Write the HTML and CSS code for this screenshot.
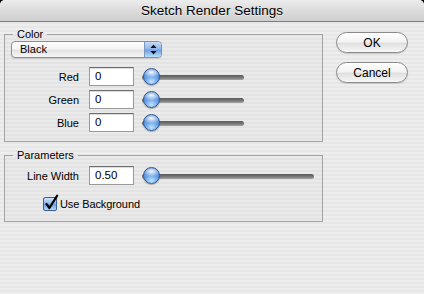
FILE: index.html
```html
<!DOCTYPE html>
<html>
<head>
<meta charset="utf-8">
<link rel="stylesheet" href="styles.css">
</head>
<body>
<div class="window">
  <div class="titlebar">Sketch Render Settings</div>
  <div class="content">
    <div class="groups">
      <fieldset class="group group-color">
        <legend class="legend">Color</legend>
        <div class="popup">
          <span class="popup-label">Black</span>
          <span class="popup-arrows">
            <svg width="7" height="11" viewBox="0 0 7 11"><path d="M3.5 0.5 L6.5 4 L0.5 4 Z M3.5 10.5 L6.5 7 L0.5 7 Z" fill="#111"/></svg>
          </span>
        </div>
        <div class="row first">
          <span class="lbl">Red</span>
          <span class="field">0</span>
          <span class="slider short"><span class="thumb"></span></span>
        </div>
        <div class="row">
          <span class="lbl">Green</span>
          <span class="field">0</span>
          <span class="slider short"><span class="thumb"></span></span>
        </div>
        <div class="row">
          <span class="lbl">Blue</span>
          <span class="field">0</span>
          <span class="slider short"><span class="thumb"></span></span>
        </div>
      </fieldset>
      <fieldset class="group group-params">
        <legend class="legend">Parameters</legend>
        <div class="row param-row">
          <span class="lbl">Line Width</span>
          <span class="field">0.50</span>
          <span class="slider long"><span class="thumb"></span></span>
        </div>
        <div class="check-row">
          <span class="checkbox">
            <svg class="check" width="16" height="17" viewBox="0 0 16 17"><path d="M3.4 9.8 L6.4 14 L14.2 1.6" fill="none" stroke="#000" stroke-width="2.2" stroke-linecap="round" stroke-linejoin="round"/></svg>
          </span>
          <span class="check-label">Use Background</span>
        </div>
      </fieldset>
    </div>
    <div class="buttons">
      <span class="btn">OK</span>
      <span class="btn">Cancel</span>
    </div>
  </div>
</div>
</body>
</html>
```

FILE: styles.css
```css
html, body {
  margin: 0;
  padding: 0;
  background: #000;
}
body {
  font-family: "Liberation Sans", Arial, sans-serif;
  font-size: 11px;
  color: #000;
}
.window {
  width: 424px;
  height: 294px;
  border-radius: 5px 5px 0 0;
  overflow: hidden;
  background: repeating-linear-gradient(to bottom, #eeeeee 0 2px, #e7e7e7 2px 4px);
}
.titlebar {
  height: 21px;
  border-bottom: 1px solid #7d7d7d;
  background: linear-gradient(to bottom, #ececec 0%, #dcdcdc 50%, #cfcfcf 100%);
  text-align: center;
  font-size: 13.5px;
  line-height: 21px;
  color: #000;
  text-shadow: 0 1px 0 rgba(255,255,255,0.5);
}
.content {
  display: flex;
  padding: 6px 0 0 4px;
  gap: 13px;
}
.groups {
  width: 319px;
  display: flex;
  flex-direction: column;
  gap: 7px;
}
.group {
  margin: 0;
  min-width: 0;
  border: 1px solid #a3a3a3;
  padding: 0 6px 9px 6px;
  background: rgba(0,0,0,0.015);
}
.legend {
  margin-left: 2px;
  padding: 0 4px;
  line-height: 13px;
  font-size: 11px;
}
.popup {
  width: 151px;
  height: 17px;
  box-sizing: border-box;
  border: 1px solid #8e8e8e;
  border-radius: 4px;
  background: linear-gradient(to bottom, #ffffff 0%, #f4f4f4 45%, #e3e3e3 55%, #f6f6f6 100%);
  display: flex;
  align-items: center;
  overflow: hidden;
  box-shadow: 0 1px 1px rgba(0,0,0,0.12);
}
.popup-label {
  flex: 1;
  padding-left: 8px;
  line-height: 15px;
}
.popup-arrows {
  width: 16px;
  height: 15px;
  display: flex;
  align-items: center;
  justify-content: center;
  border-left: 1px solid #7e97bd;
  border-radius: 0 3px 3px 0;
  background: linear-gradient(to bottom, #c6dcf7 0%, #8fb8ec 45%, #6f9fe2 55%, #b8e0fb 100%);
}
.row {
  display: flex;
  align-items: center;
  height: 19px;
  margin-top: 4px;
}
.row.first {
  margin-top: 9px;
}
.lbl {
  width: 68px;
  text-align: right;
  margin-right: 10px;
}
.field {
  width: 45px;
  height: 19px;
  box-sizing: border-box;
  border: 1px solid #9a9a9a;
  border-top-color: #6e6e6e;
  background: #fff;
  box-shadow: inset 0 1px 1px rgba(0,0,0,0.15);
  padding-left: 5px;
  line-height: 17px;
  margin-right: 8px;
  font-size: 11.5px;
}
.slider {
  position: relative;
  height: 19px;
  display: flex;
  align-items: center;
}
.slider::before {
  content: "";
  display: block;
  width: 100%;
  height: 5px;
  border-radius: 3px;
  background: linear-gradient(to bottom, #5a5a5a 0%, #767676 50%, #a4a4a4 100%);
  margin-top: 1px;
}
.slider.short { width: 102px; }
.slider.long { width: 172px; }
.thumb {
  position: absolute;
  left: 1px;
  top: 1px;
  width: 17px;
  height: 17px;
  box-sizing: border-box;
  border-radius: 50%;
  border: 1px solid #345a92;
  background:
    radial-gradient(ellipse 60% 35% at 50% 22%, rgba(255,255,255,0.95) 0%, rgba(255,255,255,0.3) 70%, rgba(255,255,255,0) 100%),
    radial-gradient(circle at 50% 85%, #c0e6ff 0%, #6fa6ea 40%, #3570cc 100%);
  box-shadow: 0 1px 1px rgba(0,0,0,0.3);
}
.param-row {
  margin-top: 4px;
}
.check-row {
  display: flex;
  align-items: center;
  margin-top: 11px;
  margin-left: 32px;
  height: 16px;
}
.checkbox {
  position: relative;
  width: 14px;
  height: 14px;
  box-sizing: border-box;
  border: 1px solid #3d5e8e;
  border-radius: 2px;
  background: linear-gradient(to bottom, #cfe3f9 0%, #8fb8ec 45%, #6c9de0 55%, #b5def9 100%);
  margin-right: 3px;
}
.check {
  position: absolute;
  left: -1px;
  top: -4px;
}
.check-label {
  line-height: 14px;
  letter-spacing: -0.1px;
}
.buttons {
  display: flex;
  flex-direction: column;
  gap: 9px;
  padding-top: 4px;
}
.btn {
  width: 72px;
  height: 21px;
  box-sizing: border-box;
  border: 1px solid #8a8a8a;
  border-radius: 11px;
  background: linear-gradient(to bottom, #ffffff 0%, #f3f3f3 45%, #e0e0e0 55%, #f7f7f7 100%);
  box-shadow: 0 1px 1px rgba(0,0,0,0.15);
  display: flex;
  align-items: center;
  justify-content: center;
  font-size: 12px;
}
```
